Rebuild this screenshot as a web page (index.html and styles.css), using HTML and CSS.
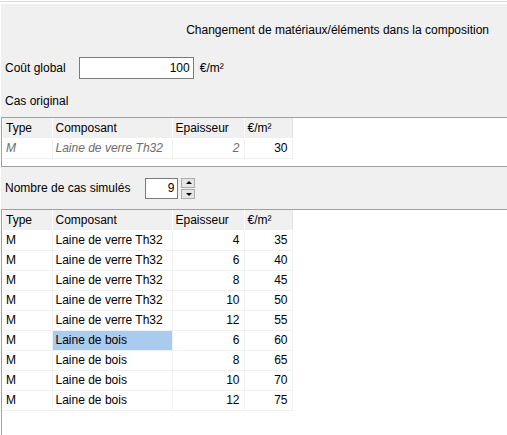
FILE: index.html
```html
<!DOCTYPE html>
<html lang="fr">
<head>
  <meta charset="UTF-8" />
  <meta name="viewport" content="width=device-width, initial-scale=1.0" />
  <title>Changement de matériaux</title>
  <link rel="stylesheet" href="styles.css">
</head>
<body>
  <div class="frame">
    <div class="panel">
      <div class="title">Changement de matériaux/éléments dans la composition</div>

      <div class="cost-row">
        <span class="label">Coût global</span>
        <input type="text" class="cost-input" value="100" />
        <span class="unit">€/m²</span>
      </div>

      <div class="section-label">Cas original</div>

      <div class="grid-box original">
        <table class="grid">
          <thead>
            <tr>
              <th class="c-type">Type</th>
              <th class="c-comp">Composant</th>
              <th class="c-ep">Epaisseur</th>
              <th class="c-price">€/m²</th>
            </tr>
          </thead>
          <tbody>
            <tr class="muted">
              <td>M</td>
              <td>Laine de verre Th32</td>
              <td class="num">2</td>
              <td class="num plain">30</td>
            </tr>
          </tbody>
        </table>
      </div>

      <div class="count-row">
        <span class="label">Nombre de cas simulés</span>
        <input type="text" class="count-input" value="9" />
        <div class="spin">
          <button class="spin-btn up"></button>
          <button class="spin-btn down"></button>
        </div>
      </div>

      <div class="grid-box cases">
        <table class="grid">
          <thead>
            <tr>
              <th class="c-type">Type</th>
              <th class="c-comp">Composant</th>
              <th class="c-ep">Epaisseur</th>
              <th class="c-price">€/m²</th>
            </tr>
          </thead>
          <tbody id="casesBody"></tbody>
        </table>
      </div>
    </div>
  </div>

  <script>
    const cases = [
      ["M", "Laine de verre Th32", 4, 35],
      ["M", "Laine de verre Th32", 6, 40],
      ["M", "Laine de verre Th32", 8, 45],
      ["M", "Laine de verre Th32", 10, 50],
      ["M", "Laine de verre Th32", 12, 55],
      ["M", "Laine de bois", 6, 60],
      ["M", "Laine de bois", 8, 65],
      ["M", "Laine de bois", 10, 70],
      ["M", "Laine de bois", 12, 75]
    ];

    const tbody = document.getElementById("casesBody");
    cases.forEach((c, index) => {
      const row = document.createElement("tr");
      const selected = index === 5 ? ' class="selected"' : "";
      row.innerHTML = `
        <td>${c[0]}</td>
        <td${selected}>${c[1]}</td>
        <td class="num">${c[2]}</td>
        <td class="num">${c[3]}</td>
      `;
      tbody.appendChild(row);
    });
  </script>
</body>
</html>
```

FILE: styles.css
```css
body {
  margin: 0;
  background: white;
  font-family: "Liberation Sans", Arial, sans-serif;
  font-size: 12px;
  color: #000;
}

.frame {
  margin-top: 1px;
  border-top: 1px solid #d9d9d9;
  padding-top: 2px;
  height: 431px;
  overflow: hidden;
}

.panel {
  margin-left: 1px;
  background: #f0f0f0;
  height: 100%;
}

.title {
  padding-top: 16px;
  height: 20px;
  line-height: 20px;
  text-align: right;
  padding-right: 18px;
}

.cost-row {
  display: flex;
  align-items: center;
  margin-top: 17px;
  height: 22px;
  padding-left: 4px;
}

.label {
  line-height: 20px;
}

.cost-input {
  box-sizing: border-box;
  width: 115px;
  height: 22px;
  margin: 0 0 0 13px;
  padding: 0 3px;
  border: 1px solid #7a7a7a;
  font: inherit;
  text-align: right;
  background: white;
}

.unit {
  margin-left: 6px;
}

.section-label {
  margin-top: 12px;
  padding-left: 4px;
  line-height: 20px;
}

.grid-box {
  background: white;
  border-top: 1px solid #a0a0a0;
  border-left: 1px solid #a0a0a0;
  padding-left: 1px;
  box-sizing: border-box;
}

.original {
  margin-top: 6px;
  height: 50px;
  border-bottom: 1px solid #a0a0a0;
}

.cases {
  height: 226px;
}

.grid {
  border-collapse: collapse;
  table-layout: fixed;
}

.grid th,
.grid td {
  height: 19px;
  padding: 0 3px;
  border-right: 1px solid #f0f0f0;
  border-bottom: 1px solid #f0f0f0;
  text-align: left;
  font-weight: normal;
  white-space: nowrap;
  box-sizing: border-box;
}

.grid th {
  height: 20px;
  background: #f0f0f0;
  border-right: 1px solid white;
  border-bottom: 1px solid white;
}

.grid th.c-price {
  border-right: 1px solid #e3e3e3;
}

.c-type { width: 49px; }
.c-comp { width: 120px; }
.c-ep { width: 72px; }
.c-price { width: 48px; }

.grid td.num {
  text-align: right;
  padding-right: 4px;
}

.grid tr:first-child td {
  height: 20px;
}

.grid td {
  height: 20px;
}

.muted td {
  color: #6d6d6d;
  font-style: italic;
}

.muted td.plain {
  color: #000;
  font-style: normal;
}

.grid td.selected {
  background: #aacbed;
}

.count-row {
  display: flex;
  align-items: center;
  height: 42px;
  padding-left: 4px;
}

.count-input {
  box-sizing: border-box;
  width: 33px;
  height: 21px;
  margin: 0 0 0 15px;
  padding: 0 3px;
  border: 1px solid #7a7a7a;
  font: inherit;
  text-align: right;
  background: white;
}

.spin {
  display: flex;
  flex-direction: column;
  gap: 1px;
  margin-left: 3px;
}

.spin-btn {
  width: 14px;
  height: 10px;
  padding: 0;
  border: 1px solid #adadad;
  background: #e5e5e5;
  position: relative;
}

.spin-btn::after {
  content: "";
  position: absolute;
  left: 4px;
  border-left: 3px solid transparent;
  border-right: 3px solid transparent;
}

.spin-btn.up::after {
  top: 2px;
  border-bottom: 3px solid #000;
}

.spin-btn.down::after {
  top: 3px;
  border-top: 3px solid #000;
}
```
